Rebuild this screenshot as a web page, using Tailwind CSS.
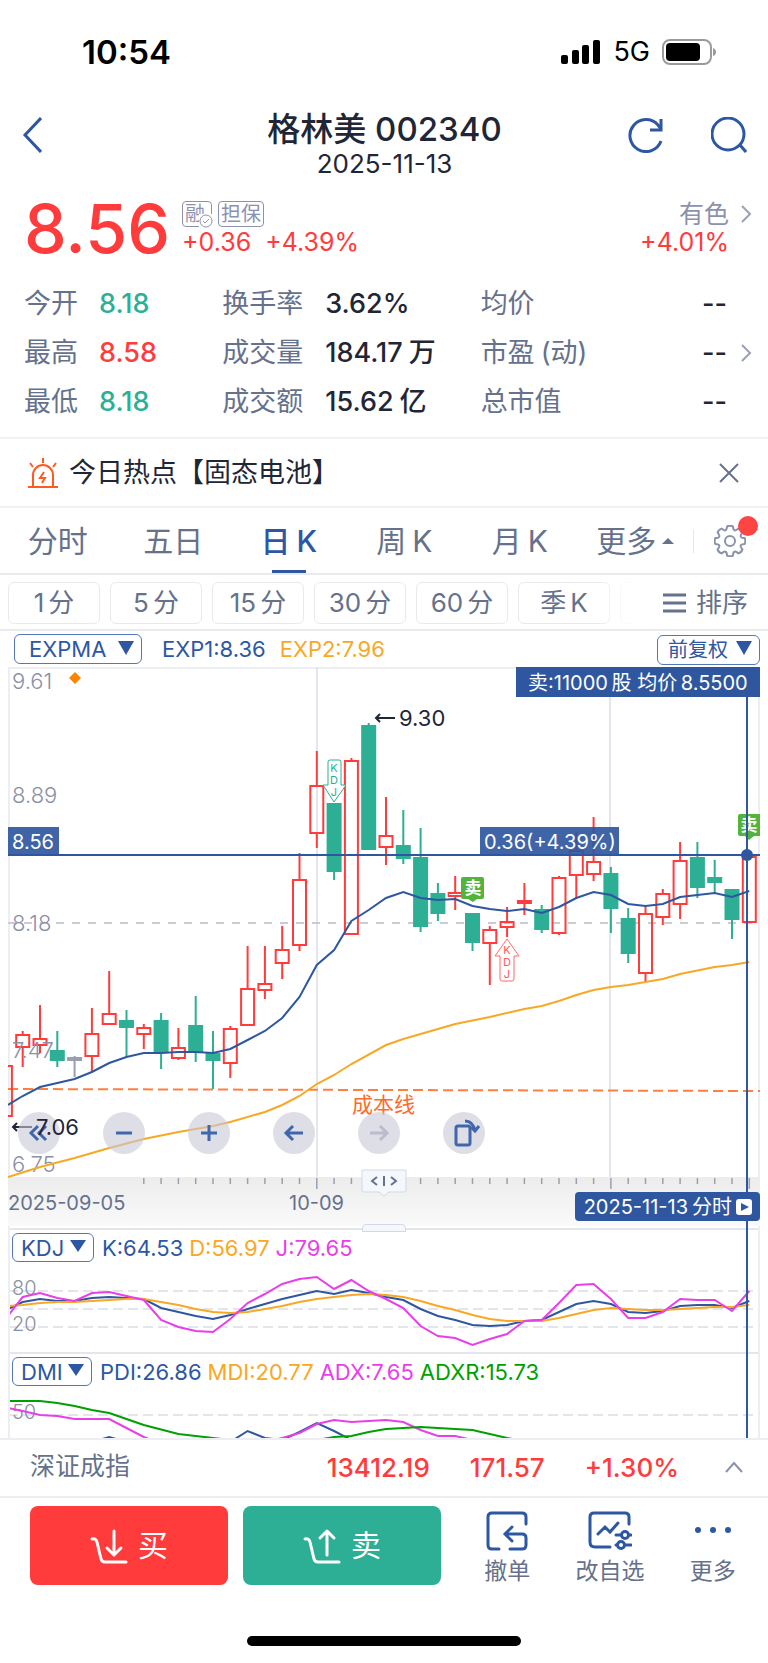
<!doctype html>
<html lang="zh-CN">
<head>
    <meta charset="UTF-8">
    <meta name="viewport" content="width=device-width, initial-scale=1">
    <title>格林美 002340</title>
    <script src="https://cdn.jsdelivr.net/npm/@tailwindcss/browser@4"></script>
</head>
<body class="bg-white text-[#1f2636] [font-family:Inter,'Noto_Sans_CJK_SC',sans-serif]">
<!--状态栏-->
<div class="flex h-[102px] items-center justify-between pt-0.5 pl-[82px] pr-[52px] text-black">
    <span class="text-[33px] leading-10 font-semibold">10:54</span>
    <div class="flex items-center gap-3">
        <svg class="h-6 w-10" viewBox="0 0 40 24" fill="currentColor">
            <rect x="0" y="15" width="7" height="9" rx="2"/>
            <rect x="11" y="10" width="7" height="14" rx="2"/>
            <rect x="21" y="5" width="7" height="19" rx="2"/>
            <rect x="32" y="0" width="7" height="24" rx="2"/>
        </svg>
        <span class="text-[27px] leading-8">5G</span>
        <svg class="h-[26px] w-[54px]" viewBox="0 0 54 26">
            <rect x="1" y="1" width="48" height="24" rx="7" fill="none" stroke="#9b9b9b" stroke-width="2"/>
            <rect x="4" y="4" width="34" height="18" rx="4"/>
            <path d="M51 9q3 1 3 4t-3 4z" fill="#9b9b9b"/>
        </svg>
    </div>
</div>

<!--标题-->
<header class="grid grid-cols-[1fr_auto_1fr] items-start pt-[9px] pb-[5px] pl-[22px] pr-[21px]">
    <button class="mt-1.5 w-9" aria-label="返回">
        <svg class="h-9 w-5" viewBox="0 0 20 36" fill="none" stroke="#2d57a3" stroke-width="3"><path d="M19 1L3 18l16 17"/></svg>
    </button>
    <div class="text-center">
        <h1 class="text-[33px] leading-9 font-medium">格林美 002340</h1>
        <p class="text-[26px] leading-[34px]">2025-11-13</p>
    </div>
    <div class="mt-1.5 flex justify-end gap-12 text-[#2d57a3]">
        <button aria-label="刷新">
            <svg class="size-9" viewBox="0 0 36 36" fill="none" stroke="currentColor" stroke-width="3">
                <path d="M34 24A16 16 0 1 1 31 8l3 4"/><path d="M34 2v11H23"/>
            </svg>
        </button>
        <button aria-label="搜索">
            <svg class="size-9" viewBox="0 0 36 36" fill="none" stroke="currentColor" stroke-width="3">
                <circle cx="17" cy="17" r="16"/><path d="M29 28l6 7"/>
            </svg>
        </button>
    </div>
</header>

<!--最新价-->
<section class="flex items-center gap-3 pt-3.5 pb-[22px] pl-6 pr-4">
    <div class="text-[68px] leading-[56px] font-medium text-[#ff3b3b]">8.56</div>
    <div class="flex-1">
        <div class="flex h-7 items-center gap-1.5 text-xl leading-6 text-[#8b92b0]">
            <span class="relative h-[26px] w-[30px] rounded border-[1.5px] border-current pl-0.5">融
                <svg class="absolute -right-0.5 -bottom-0.5 size-3.5 bg-white" viewBox="0 0 14 14" fill="none" stroke="currentColor">
                    <circle cx="7" cy="7" r="6"/><path d="M4 7l2 2 4-4"/>
                </svg>
            </span>
            <span class="h-[26px] rounded border-[1.5px] border-current px-0.5">担保</span>
        </div>
        <div class="flex h-7 items-center gap-3.5 text-[25px] leading-7 text-[#ff3b3b]">
            <span>+0.36</span><span>+4.39%</span>
        </div>
    </div>
    <a href="#" class="grid grid-cols-[auto_23px] items-center text-right leading-7">
        <span class="text-[25px] leading-7 text-[#8b92ab]">有色</span>
        <svg class="ml-auto h-5 w-3" viewBox="0 0 12 20" fill="none" stroke="#9aa0b5" stroke-width="2"><path d="M2 2l8 8-8 8"/></svg>
        <span class="text-[25px] text-[#ff3b3b]">+4.01%</span>
    </a>
</section>

<!--行情指标-->
<dl class="grid grid-cols-[198fr_258fr_246fr_25fr] pt-px pb-[11px] pl-6 pr-4 text-[27px] leading-[49px]">
    <div class="flex"><dt class="w-[75px] text-[#66718c]">今开</dt><dd class="font-medium text-[#2caf94]">8.18</dd></div>
    <div class="flex"><dt class="w-[103px] text-[#66718c]">换手率</dt><dd class="font-medium">3.62%</dd></div>
    <div class="flex justify-between"><dt class="text-[#66718c]">均价</dt><dd class="font-medium">--</dd></div>
    <span></span>
    <div class="flex"><dt class="w-[75px] text-[#66718c]">最高</dt><dd class="font-medium text-[#ff3b3b]">8.58</dd></div>
    <div class="flex"><dt class="w-[103px] text-[#66718c]">成交量</dt><dd class="flex gap-1.5 font-medium">184.17<span>万</span></dd></div>
    <div class="flex justify-between"><dt class="flex gap-1.5 text-[#66718c]">市盈<span>(动)</span></dt><dd class="font-medium">--</dd></div>
    <svg class="h-5 w-3 self-center justify-self-end" viewBox="0 0 12 20" fill="none" stroke="#9aa0b5" stroke-width="2"><path d="M2 2l8 8-8 8"/></svg>
    <div class="flex"><dt class="w-[75px] text-[#66718c]">最低</dt><dd class="font-medium text-[#2caf94]">8.18</dd></div>
    <div class="flex"><dt class="w-[103px] text-[#66718c]">成交额</dt><dd class="flex gap-1.5 font-medium">15.62<span>亿</span></dd></div>
    <div class="flex justify-between"><dt class="text-[#66718c]">总市值</dt><dd class="font-medium">--</dd></div>
    <span></span>
</dl>

<!--热点-->
<section class="flex h-[71px] items-center gap-[11px] border-y-2 border-[#f1f2f4] pl-7 pr-[29px]">
    <svg class="size-[30px]" viewBox="0 0 30 30" fill="none" stroke="#ff5a1f" stroke-width="2">
        <path d="M15 0v5M2 5l3 4M28 5l-3 4M0 29h30M5 28V17a10 10 0 0 1 20 0v11"/>
        <path d="M16 14l-4 6h5l-3 5"/>
    </svg>
    <a href="#" class="flex-1 text-[27px] leading-9">今日热点【固态电池】</a>
    <button aria-label="关闭">
        <svg class="size-5" viewBox="0 0 20 20" fill="none" stroke="#66718c" stroke-width="2"><path d="M1 1l18 18M19 1L1 19"/></svg>
    </button>
</section>

<!--周期选项卡-->
<div class="flex h-[67px] items-center border-b-2 border-[#e8eaee]">
    <nav class="grid h-full flex-1 grid-cols-6 text-[30px] leading-10 text-[#66718c]">
        <button>分时</button>
        <button>五日</button>
        <button class="relative flex items-center justify-center gap-1.5 font-medium text-[#2d57a3]">日<span>K</span><span class="absolute bottom-0 left-1/2 h-[3px] w-[34px] -translate-x-1/2 bg-[#2d57a3]"></span></button>
        <button class="flex items-center justify-center gap-1.5">周<span>K</span></button>
        <button class="flex items-center justify-center gap-1.5">月<span>K</span></button>
        <button class="flex items-center justify-center gap-1.5">更多<svg class="h-1.5 w-3" viewBox="0 0 12 6" fill="currentColor"><path d="M6 0l6 6H0z"/></svg></button>
    </nav>
    <div class="flex h-8 w-[75px] items-center">
        <span class="h-6 w-px bg-[#e4e6ec]"></span>
        <button class="relative ml-5" aria-label="设置">
            <svg class="size-8" viewBox="0 0 32 32" fill="none" stroke="#8b92ab" stroke-width="2">
                <path d="M30.700 13.100Q32 16 30.700 18.900Q23.900 19.300 28.400 24.400Q27.500 27.500 24.400 28.400Q19.300 23.900 18.900 30.700Q16 32 13.100 30.700Q12.700 23.900 7.600 28.400Q4.500 27.500 3.600 24.400Q8.100 19.300 1.300 18.900Q0 16 1.300 13.100Q8.100 12.700 3.600 7.600Q4.500 4.500 7.600 3.600Q12.700 8.100 13.100 1.300Q16 0 18.900 1.300Q19.300 8.100 24.400 3.600Q27.500 4.500 28.400 7.600Q23.900 12.700 30.700 13.100Z"/>
                <circle cx="16" cy="16" r="5"/>
            </svg>
            <span class="absolute -top-[9px] -right-3 size-5 rounded-full bg-[#ff4444]"></span>
        </button>
    </div>
</div>

<!--分钟周期-->
<div class="flex border-b-2 border-[#e8eaee] pt-[7px] pb-[5px] pl-2 text-[26px] leading-8 text-[#66718c]">
    <div class="relative flex flex-1 gap-2.5 overflow-hidden">
        <button class="flex h-[42px] w-[92px] shrink-0 items-center justify-center gap-1 rounded-md border-[1.5px] border-[#e8eaee]">1<span>分</span></button>
        <button class="flex h-[42px] w-[92px] shrink-0 items-center justify-center gap-1 rounded-md border-[1.5px] border-[#e8eaee]">5<span>分</span></button>
        <button class="flex h-[42px] w-[92px] shrink-0 items-center justify-center gap-1 rounded-md border-[1.5px] border-[#e8eaee]">15<span>分</span></button>
        <button class="flex h-[42px] w-[92px] shrink-0 items-center justify-center gap-1 rounded-md border-[1.5px] border-[#e8eaee]">30<span>分</span></button>
        <button class="flex h-[42px] w-[92px] shrink-0 items-center justify-center gap-1 rounded-md border-[1.5px] border-[#e8eaee]">60<span>分</span></button>
        <button class="flex h-[42px] w-[92px] shrink-0 items-center justify-center gap-1 rounded-md border-[1.5px] border-[#e8eaee]">季<span>K</span></button>
        <button class="flex h-[42px] w-[92px] shrink-0 items-center justify-center gap-1 rounded-md border-[1.5px] border-[#e8eaee]">年<span>K</span></button>
        <div class="absolute inset-y-0 right-0 w-14 bg-linear-to-r from-white/0 to-white to-70%"></div>
    </div>
    <button class="flex items-center gap-2.5 pl-2.5 pr-5">
        <svg class="h-5 w-[23px]" viewBox="0 0 23 20" stroke="currentColor" stroke-width="3"><path d="M0 2h23M0 10h23M0 18h23"/></svg>
        排序
    </button>
</div>

<!--主图指标-->
<div class="flex h-9 items-center pl-3.5 pr-2 text-[22px] text-[#2d57a3]">
    <label class="relative">
        <select aria-label="主图指标" class="h-[30px] w-32 appearance-none rounded-md border-[1.5px] border-[#5377b8] pl-3.5 leading-6"><option>EXPMA</option></select>
        <svg class="pointer-events-none absolute top-2 right-2 h-3.5 w-4" viewBox="0 0 16 14" fill="currentColor"><path d="M0 0h16L8 14z"/></svg>
    </label>
    <span class="ml-5">EXP1:8.36</span>
    <span class="ml-3.5 flex-1 text-[#f9a825]">EXP2:7.96</span>
    <label class="relative">
        <select aria-label="复权" class="h-[30px] w-[103px] appearance-none rounded-md border-[1.5px] border-[#5377b8] pl-2.5 text-xl leading-6"><option>前复权</option></select>
        <svg class="pointer-events-none absolute top-2 right-2 h-3.5 w-4" viewBox="0 0 16 14" fill="currentColor"><path d="M0 0h16L8 14z"/></svg>
    </label>
</div>

<!--K线图-->
<section class="relative mx-2">
    <div class="pointer-events-none absolute inset-0 border-x-2 border-[#eceef1]"></div>

    <div class="relative">
        <svg class="block w-full" viewBox="8 0 752 561" font-size="22">
            <defs>
                <linearGradient id="axis-bg" x1="0" y1="0" x2="0" y2="1">
                    <stop offset="0" stop-color="#ececec"/><stop offset="1" stop-color="#fafafa"/>
                </linearGradient>
            </defs>
            <path d="M8 1h752" stroke="#eceef1" stroke-width="2"/>
            <path d="M317 0v510M610 0v510" stroke="#dcdde8" stroke-width="1.500"/>
            <path d="M8 256h752" stroke="#c8ccd5" stroke-width="2" stroke-dasharray="8 8"/>
            <rect x="8" y="510" width="752" height="49" fill="url(#axis-bg)"/>
            <g id="ticks" stroke="#9aa0b0" stroke-width="1.500"></g>
            <path d="M8 422L760 424" stroke="#ff7f3f" stroke-width="2" stroke-dasharray="10 5"/>
            <g id="candles" stroke-width="2"></g>
            <g fill="#8b90a8" font-weight="300">
                <text x="12" y="22">9.61</text>
                <text x="12" y="136">8.89</text>
                <text x="12" y="264">8.18</text>
                <text x="12" y="391">7.47</text>
                <text x="12" y="505">6.75</text>
            </g>
            <path d="M75 5l6 6-6 6-6-6z" fill="#ff8400"/>
            <g id="main-lines" fill="none" stroke-width="2"></g>
            <text x="352" y="445" font-size="21" fill="#ff6a2a">成本线</text>

            <!-- KDJ 买卖点 -->
            <path d="M330 93h9q2 0 2 2v23h5l-12 17-11-17h5V95q0-2 2-2z" fill="#fff" stroke="#2caf94"/>
            <path d="M507 272l12 17h-5v23q0 2-2 2h-10q-2 0-2-2v-23h-5z" fill="#fff" stroke="#ff6b6b"/>
            <g font-size="11" text-anchor="middle">
                <g fill="#2caf94"><text x="334" y="105">K</text><text x="334" y="117">D</text><text x="334" y="129">J</text></g>
                <g fill="#ff5b5b"><text x="507" y="287">K</text><text x="507" y="299">D</text><text x="507" y="311">J</text></g>
            </g>
            <g fill="#52b43c">
                <path d="M463 210h19q2 0 2 2v18q0 2-2 2h-5l-4 3-5-3h-5q-2 0-2-2v-18q0-2 2-2z"/>
                <path d="M740 147h20v22h-6l-5 4-4-4h-5q-2 0-2-2v-18q0-2 2-2z"/>
            </g>
            <g font-size="17" font-weight="700" fill="#fff" text-anchor="middle">
                <text x="473" y="227">卖</text>
                <text x="749" y="164">卖</text>
            </g>

            <!-- 最高最低 -->
            <text x="399" y="59" fill="#1f2636">9.30</text>
            <path d="M395 51h-19m4-4l-4 4 4 4M32 460H13m4-4l-4 4 4 4" fill="none" stroke="#1f2636" stroke-width="2"/>

            <!-- 十字光标 -->
            <g fill="#2f57a0">
                <rect x="8" y="160" width="51" height="28" opacity=".92"/>
                <rect x="480" y="160" width="139" height="28" opacity=".92"/>
                <rect x="8" y="187" width="752" height="2"/>
                <rect x="516" y="0" width="244" height="30"/>
                <circle cx="747" cy="188" r="6"/>
            </g>
            <g fill="#fff" font-size="20">
                <text x="12" y="182">8.56</text>
                <text x="484" y="182">0.36(+4.39%)</text>
                <text x="528" y="23">卖:11000&thinsp;股 均价&thinsp;8.5500</text>
            </g>

            <g fill="#66718c" font-size="20">
                <text x="8" y="543">2025-09-05</text>
                <text x="289" y="543">10-09</text>
            </g>

            <!-- 拖动手柄 -->
            <g fill="#f4f7fc" stroke="#d3d9e4">
                <path d="M362 503h44v20q0 2-2 2h-15l-5 4-5-4h-15q-2 0-2-2z"/>
            </g>
            <path d="M377 510l-5 4 5 4M384 509v10M391 510l5 4-5 4" fill="none" stroke="#66718c" stroke-width="2"/>
        </svg>

        <div class="absolute top-[79.3%] left-2.5 flex gap-[43px] text-[#4067ae]">
            <button class="size-[42px] rounded-full bg-[#c8c8d6]/60" aria-label="最左">
                <svg class="size-full" viewBox="0 0 42 42" fill="none" stroke="currentColor" stroke-width="3"><path d="M20 14l-7 7 7 7M28 14l-7 7 7 7"/></svg>
            </button>
            <button class="size-[42px] rounded-full bg-[#c8c8d6]/60" aria-label="缩小">
                <svg class="size-full" viewBox="0 0 42 42" fill="none" stroke="currentColor" stroke-width="3"><path d="M13 21h16"/></svg>
            </button>
            <button class="size-[42px] rounded-full bg-[#c8c8d6]/60" aria-label="放大">
                <svg class="size-full" viewBox="0 0 42 42" fill="none" stroke="currentColor" stroke-width="3"><path d="M13 21h16M21 13v16"/></svg>
            </button>
            <button class="size-[42px] rounded-full bg-[#c8c8d6]/60" aria-label="左移">
                <svg class="size-full" viewBox="0 0 42 42" fill="none" stroke="currentColor" stroke-width="3"><path d="M30 21H13M20 14l-7 7 7 7"/></svg>
            </button>
            <button class="size-[42px] rounded-full bg-[#c8c8d6]/60 text-[#b9bcca]" aria-label="右移">
                <svg class="size-full" viewBox="0 0 42 42" fill="none" stroke="currentColor" stroke-width="3"><path d="M12 21h17M22 14l7 7-7 7"/></svg>
            </button>
            <button class="size-[42px] rounded-full bg-[#c8c8d6]/60" aria-label="横屏">
                <svg class="size-full" viewBox="0 0 42 42" fill="none" stroke="currentColor" stroke-width="3"><rect x="13" y="14" width="14" height="19" rx="2"/><path d="M22 9q8 0 10 10M28 15l4 4 4-5"/></svg>
            </button>
        </div>
        <!--最低价压在按钮上面-->
        <span class="pointer-events-none absolute top-[79.8%] left-7 text-[22px] leading-6">7.06</span>

        <div class="absolute -bottom-1 left-1/2 h-2 w-11 -translate-x-1/2 rounded-t border border-[#d3d9e4] bg-[#f4f7fc]"></div>

        <button class="absolute right-0 bottom-[7px] z-10 flex h-[29px] items-center gap-1 rounded bg-[#2f57a0] pr-2 pl-[9px] text-xl leading-6 text-white">
            2025-11-13<span>分时</span>
            <svg class="size-4" viewBox="0 0 16 16"><rect width="16" height="16" rx="3" fill="#fff"/><path d="M5 4l8 4-8 4z" fill="#2f57a0"/></svg>
        </button>
    </div>

    <!--KDJ-->
    <div class="border-t-2 border-[#e4e6ec]">
        <div class="flex h-9 items-center gap-1.5 pl-1 text-[22px] text-[#2d57a3]">
            <label class="relative mr-0.5">
                <select aria-label="副图指标一" class="h-[29px] w-[82px] appearance-none rounded-md border-[1.5px] border-[#5377b8] pl-2 leading-6"><option>KDJ</option></select>
                <svg class="pointer-events-none absolute top-2 right-2 h-3 w-4" viewBox="0 0 16 12" fill="currentColor"><path d="M0 0h16L8 12z"/></svg>
            </label>
            <span>K:64.53</span>
            <span class="text-[#f9a825]">D:56.97</span>
            <span class="text-[#e83fe8]">J:79.65</span>
        </div>
        <svg class="block w-full" viewBox="8 38 752 86">
            <path d="M8 63h752M8 81h752M8 99h752" stroke="#e4e5ea" stroke-width="2" stroke-dasharray="10 5"/>
            <g fill="#8b90a0" font-size="20" font-weight="300"><text x="12" y="67">80</text><text x="12" y="103">20</text></g>
            <g id="kdj-lines" fill="none" stroke-width="2"></g>
        </svg>
    </div>

    <!--DMI-->
    <div class="border-t-2 border-[#e4e6ec]">
        <div class="flex h-9 items-center gap-1.5 pl-1 text-[22px] text-[#2d57a3]">
            <label class="relative mr-0.5">
                <select aria-label="副图指标二" class="h-[29px] w-20 appearance-none rounded-md border-[1.5px] border-[#5377b8] pl-2 leading-6"><option>DMI</option></select>
                <svg class="pointer-events-none absolute top-2 right-2 h-3 w-4" viewBox="0 0 16 12" fill="currentColor"><path d="M0 0h16L8 12z"/></svg>
            </label>
            <span>PDI:26.86</span>
            <span class="text-[#f9a825]">MDI:20.77</span>
            <span class="text-[#e83fe8]">ADX:7.65</span>
            <span class="text-[#00a000]">ADXR:15.73</span>
        </div>
        <svg class="block w-full" viewBox="8 38 752 48">
            <path d="M8 63h752" stroke="#e4e5ea" stroke-width="2" stroke-dasharray="10 5"/>
            <text x="12" y="67" fill="#8b90a0" font-size="20" font-weight="300">50</text>
            <g id="dmi-lines" fill="none" stroke-width="2"></g>
        </svg>
    </div>

    <div class="absolute top-[30px] bottom-0 left-[98.2%] w-0.5 bg-[#2f57a0]"></div>
</section>

<!--大盘指数-->
<section class="flex h-[60px] items-center border-y-2 border-[#eceef1] pb-0.5 pl-[30px] pr-[25px] text-[26px]">
    <span class="flex-1 text-[25px] text-[#66718c]">深证成指</span>
    <div class="flex gap-10 text-[#ff3b3b] font-medium"><span>13412.19</span><span>171.57</span><span>+1.30%</span></div>
    <button class="ml-[46px]" aria-label="展开">
        <svg class="h-3 w-[18px]" viewBox="0 0 18 12" fill="none" stroke="#8b92ab" stroke-width="2"><path d="M1 11l8-9 8 9"/></svg>
    </button>
</section>

<!--底部操作-->
<footer>
    <div class="flex gap-[15px] pt-2 pl-[30px] pr-1">
        <button class="flex h-[79px] w-[198px] items-center justify-center gap-2.5 rounded-lg bg-[#ff3b3b] text-[30px] text-white">
            <svg class="h-9 w-[38px]" viewBox="0 0 38 36" fill="none" stroke="currentColor" stroke-width="3" stroke-linecap="round" stroke-linejoin="round"><path d="M2 11q4-1 5 3l4 17q1 3 4 3h21M24 3v23M17 20l7 7 7-7"/></svg>
            买
        </button>
        <button class="flex h-[79px] w-[198px] items-center justify-center gap-2.5 rounded-lg bg-[#2caf94] text-[30px] text-white">
            <svg class="h-9 w-[38px]" viewBox="0 0 38 36" fill="none" stroke="currentColor" stroke-width="3" stroke-linecap="round" stroke-linejoin="round"><path d="M2 11q4-1 5 3l4 17q1 3 4 3h21M24 27V3M17 10l7-7 7 7"/></svg>
            卖
        </button>
        <div class="grid flex-1 grid-cols-3 text-[23px] leading-8 text-[#66718c]">
            <button class="flex flex-col items-center gap-1 pt-[5px]">
                <svg class="h-10 w-[42px]" viewBox="0 0 42 40" fill="none" stroke="#2d57a3" stroke-width="3" stroke-linecap="round">
                    <path d="M40 13V6q0-4-4-4H6Q2 2 2 6v28q0 4 4 4h7M24 38h12q4 0 4-4V27q0-4-4-4H19M26 16l-7 7 7 7"/>
                </svg>
                撤单
            </button>
            <button class="flex flex-col items-center gap-1 pt-[5px]">
                <svg class="h-10 w-[44px]" viewBox="0 0 44 40" fill="none" stroke="#2d57a3" stroke-width="3" stroke-linecap="round">
                    <path d="M41 13V6q0-4-4-4H6Q2 2 2 6v25q0 5 5 5h15M10 23l7-7 5 5 8-9M28 24h5M41 24h2M28 34h1M37 34h6"/>
                    <circle cx="37" cy="24" r="3.500"/><circle cx="33" cy="34" r="3.500"/>
                </svg>
                改自选
            </button>
            <button class="flex flex-col items-center gap-1 pt-[5px]">
                <svg class="h-10 w-[38px]" viewBox="0 0 38 40" fill="#2d57a3"><circle cx="4" cy="19" r="3"/><circle cx="19" cy="19" r="3"/><circle cx="34" cy="19" r="3"/></svg>
                更多
            </button>
        </div>
    </div>
    <div class="mx-auto mt-[49px] mb-[15px] h-2.5 w-[274px] rounded-full bg-black"></div>
</footer>
</body>

<script>
    const RED = '#ff3b3b', GREEN = '#2caf94', GRAY = '#9a9fb0';
    const BLUE = '#2f57a0', ORANGE = '#f9a825', PINK = '#e83fe8';

    // 第 i 根K线的中心
    function cx(i) {
        return 5.4 + 17.3 * i;
    }

    // [类型, 影线顶, 实体顶, 实体底, 影线底]
    const candles = [
        ['r', 398, 398, 450, 450], ['r', 364, 367, 381, 400], ['r', 338, 371, 379, 386], ['g', 364, 383, 394, 400],
        ['x', 389, 390, 394, 410], ['r', 341, 366, 390, 405], ['r', 304, 346, 358, 358], ['g', 343, 353, 361, 390],
        ['r', 357, 360, 368, 382], ['g', 346, 353, 386, 402], ['r', 361, 380, 392, 393], ['g', 329, 358, 385, 395],
        ['g', 364, 386, 394, 422], ['r', 359, 361, 397, 411], ['r', 279, 321, 359, 359], ['r', 279, 316, 324, 332],
        ['r', 259, 282, 297, 312], ['r', 186, 212, 279, 284], ['r', 84, 118, 167, 181], ['g', 136, 136, 205, 213],
        ['r', 91, 93, 268, 268], ['g', 56, 58, 183, 183], ['r', 130, 168, 181, 198], ['g', 143, 178, 192, 197],
        ['g', 161, 190, 260, 265], ['g', 216, 226, 247, 254], ['r', 209, 225, 230, 243], ['g', 246, 246, 276, 284],
        ['r', 259, 262, 277, 318], ['r', 240, 254, 261, 270], ['r', 216, 233, 237, 248], ['g', 238, 242, 263, 266],
        ['r', 209, 210, 267, 268], ['r', 165, 183, 209, 231], ['r', 150, 194, 208, 214], ['g', 200, 206, 242, 266],
        ['g', 241, 251, 287, 296], ['r', 239, 246, 307, 315], ['r', 222, 226, 251, 258], ['r', 175, 193, 238, 252],
        ['g', 175, 190, 221, 231], ['g', 193, 210, 216, 226], ['g', 222, 222, 253, 272], ['r', 189, 189, 256, 256]
    ];

    let html = '';
    candles.forEach(([type, high, top, bottom, low], i) => {
        const x = cx(i);
        const color = type === 'r' ? RED : type === 'g' ? GREEN : GRAY;
        html += `<path d="M${x} ${high}V${top}M${x} ${bottom}V${low}" stroke="${color}"/>`;
        if (type === 'r') {
            html += `<rect x="${x - 6.5}" y="${top + 1}" width="13" height="${bottom - top - 2}" fill="none" stroke="${color}"/>`;
        } else {
            html += `<rect x="${x - 7.5}" y="${top}" width="15" height="${bottom - top}" fill="${color}"/>`;
        }
    });
    document.getElementById('candles').innerHTML = html;

    // 时间刻度
    html = '';
    for (let i = 8; i < candles.length; i++) {
        const long = i === 18 || i === 35 || i === 43;
        html += `<path d="M${cx(i)} 511v${long ? 11 : 6}"/>`;
    }
    document.getElementById('ticks').innerHTML = html;

    // 折线, points 为 [序号, y]
    function line(id, color, points) {
        const d = points.map(([i, y]) => `${Math.max(8, cx(i))},${y}`).join(' ');
        document.getElementById(id).innerHTML += `<polyline points="${d}" stroke="${color}"/>`;
    }

    function series(values) {
        return values.map((y, i) => [i, y]);
    }

    line('main-lines', ORANGE, [[0, 510], [2, 500], [4, 491], [6, 481], [8, 472], [10, 465], [12, 459], [13, 455], [15, 445],
        [16, 438], [17, 429], [18, 417], [19, 408], [20, 397], [22, 378], [23, 372], [25, 362], [26, 357], [28, 350], [30, 342],
        [31, 339], [32, 334], [33, 328], [34, 323], [35, 320], [36, 318], [37, 315], [38, 312], [39, 307], [41, 300], [42, 298], [43, 295]]);
    line('main-lines', BLUE, series([438, 429, 420, 416, 412, 405, 396, 390, 386, 386, 385, 385, 386, 382, 373, 364, 351, 330, 298, 283, 254, 243,
        231, 225, 231, 233, 232, 239, 242, 244, 242, 246, 240, 231, 225, 228, 237, 239, 237, 230, 228, 226, 230, 224]));

    line('kdj-lines', BLUE, series([81, 74, 71, 73, 73, 70, 69, 70, 71, 80, 84, 88, 91, 87, 81, 76, 71, 67, 63, 66, 62, 65,
        69, 72, 81, 88, 92, 97, 98, 97, 93, 92, 84, 76, 73, 76, 84, 85, 83, 78, 77, 77, 80, 73]));
    line('kdj-lines', ORANGE, series([78, 77, 75, 74, 74, 73, 72, 71, 71, 74, 77, 81, 84, 85, 84, 81, 78, 74, 71, 69, 67, 66,
        67, 69, 73, 78, 82, 87, 91, 93, 93, 93, 90, 86, 82, 80, 81, 82, 82, 81, 80, 79, 79, 77]));
    line('kdj-lines', PINK, series([88, 69, 65, 70, 73, 65, 64, 68, 72, 92, 99, 103, 104, 91, 75, 66, 56, 51, 49, 61, 52, 63,
        71, 80, 98, 108, 110, 117, 111, 106, 93, 92, 75, 57, 56, 71, 90, 90, 84, 71, 72, 72, 83, 63]));

    line('dmi-lines', BLUE, [[5, 90], [6, 85], [7, 90], [13, 90], [14, 79], [15, 86], [16, 88], [17, 80], [18, 71], [19, 79], [20, 88]]);
    line('dmi-lines', PINK, [[0, 56], [1, 59], [2, 63], [3, 64], [4, 67], [5, 67], [6, 67], [7, 76], [8, 85], [9, 92], [15, 90],
        [16, 86], [17, 81], [18, 72], [19, 68], [20, 70], [21, 69], [22, 68], [23, 70], [24, 78], [25, 84], [26, 84], [27, 88]]);
    line('dmi-lines', '#00a000', [[0, 49], [2, 49], [3, 51], [4, 54], [5, 58], [6, 61], [8, 73], [10, 82], [11, 84], [12, 86],
        [14, 90], [18, 88], [19, 85], [20, 84], [21, 80], [22, 77], [24, 75], [25, 76], [27, 78], [28, 82], [29, 86], [31, 92]]);
</script>
</html>
